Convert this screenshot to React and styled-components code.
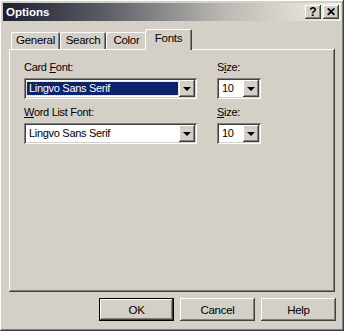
import React from "react";
import styled, { createGlobalStyle, css } from "styled-components";

const Global = createGlobalStyle`
  html, body {
    margin: 0;
    padding: 0;
    background: #d4d0c8;
  }
  body {
    font-family: "Liberation Sans", Arial, sans-serif;
    font-size: 11px;
    letter-spacing: -0.3px;
    color: #000;
  }
`;

const raised = css`
  box-shadow: inset -1px -1px 0 #404040, inset 1px 1px 0 #ffffff,
    inset -2px -2px 0 #808080, inset 2px 2px 0 #d4d0c8;
`;

const sunken = css`
  box-shadow: inset 1px 1px 0 #808080, inset -1px -1px 0 #ffffff,
    inset 2px 2px 0 #404040, inset -2px -2px 0 #d4d0c8;
`;

const Window = styled.div`
  width: 344px;
  height: 331px;
  box-sizing: border-box;
  padding: 3px;
  background: #d4d0c8;
  display: flex;
  flex-direction: column;
  ${raised};
`;

const TitleBar = styled.div`
  height: 18px;
  display: flex;
  align-items: center;
  justify-content: space-between;
  padding: 0 2px 0 3px;
  background: linear-gradient(to right, #1c1f2e 0%, #5b5d66 30%, #b9b8b2 65%, #f4f1e6 100%);
`;

const Title = styled.span`
  color: #fff;
  font-weight: bold;
  font-size: 11.5px;
  letter-spacing: 0;
`;

const Caps = styled.div`
  display: flex;
  gap: 2px;
`;

const CapButton = styled.div`
  width: 16px;
  height: 14px;
  box-sizing: border-box;
  background: #d4d0c8;
  display: flex;
  align-items: center;
  justify-content: center;
  font-weight: bold;
  font-size: 12px;
  line-height: 1;
  letter-spacing: 0;
  ${raised};
`;

const Body = styled.div`
  flex: 1;
  display: flex;
  flex-direction: column;
  padding: 8px 6px 0 6px;
`;

const TabRow = styled.div`
  display: flex;
  align-items: flex-end;
  height: 20px;
  padding-left: 2px;
  position: relative;
  z-index: 1;
`;

const Tab = styled.div`
  box-sizing: border-box;
  width: ${(p) => p.w}px;
  height: ${(p) => (p.active ? 21 : 17)}px;
  margin-left: ${(p) => (p.active ? -2 : 0)}px;
  margin-bottom: ${(p) => (p.active ? -1 : 0)}px;
  padding-top: ${(p) => (p.active ? 3 : 2)}px;
  text-align: center;
  font-size: 11.5px;
  background: #d4d0c8;
  border-radius: 2px 2px 0 0;
  box-shadow: inset 1px 1px 0 #ffffff, inset -1px 0 0 #404040, inset -2px 0 0 #808080;
`;

const Panel = styled.div`
  width: 326px;
  height: 243px;
  box-sizing: border-box;
  padding: 12px 15px;
  background: #d4d0c8;
  ${raised};
`;

const FieldRow = styled.div`
  display: flex;
  gap: 20px;
  margin-bottom: 7px;
`;

const Field = styled.div`
  display: flex;
  flex-direction: column;
`;

const Label = styled.label`
  height: 13px;
  line-height: 13px;
  margin-bottom: 4px;
  u {
    text-decoration: underline;
    text-underline-offset: 1px;
  }
`;

const Combo = styled.div`
  width: ${(p) => p.w}px;
  height: 21px;
  box-sizing: border-box;
  padding: 2px;
  background: #fff;
  display: flex;
  ${sunken};
`;

const ComboText = styled.div`
  flex: 1;
  display: flex;
  align-items: center;
  padding: 1px;
`;

const ComboValue = styled.span`
  flex: 1;
  height: 13px;
  line-height: 13px;
  padding: 0 2px;
  ${(p) =>
    p.selected &&
    css`
      background: #0a246a;
      color: #fff;
      outline: 1px dotted #d4d0c8;
      outline-offset: 0;
    `}
`;

const DropButton = styled.div`
  width: 16px;
  height: 17px;
  box-sizing: border-box;
  background: #d4d0c8;
  display: flex;
  align-items: center;
  justify-content: center;
  ${raised};
`;

const Arrow = styled.div`
  width: 0;
  height: 0;
  border-left: 4px solid transparent;
  border-right: 4px solid transparent;
  border-top: 4px solid #000;
  margin-top: 1px;
`;

const ButtonRow = styled.div`
  display: flex;
  justify-content: flex-end;
  gap: 6px;
  padding: 6px 0 0 0;
  margin-right: -1px;
`;

const Button = styled.div`
  width: 75px;
  height: 23px;
  box-sizing: border-box;
  display: flex;
  align-items: center;
  justify-content: center;
  background: #d4d0c8;
  font-size: 11.5px;
  ${(p) =>
    p.primary
      ? css`
          box-shadow: inset 0 0 0 1px #000, inset -2px -2px 0 #404040,
            inset 2px 2px 0 #ffffff, inset -3px -3px 0 #808080;
        `
      : raised};
`;

const ComboBox = ({ w, value, selected }) => (
  <Combo w={w}>
    <ComboText>
      <ComboValue selected={selected}>{value}</ComboValue>
    </ComboText>
    <DropButton>
      <Arrow />
    </DropButton>
  </Combo>
);

const tabs = [
  { name: "General", w: 49 },
  { name: "Search", w: 46 },
  { name: "Color", w: 41 },
  { name: "Fonts", w: 47, active: true },
];

export default function App() {
  return (
    <>
      <Global />
      <Window>
        <TitleBar>
          <Title>Options</Title>
          <Caps>
            <CapButton>?</CapButton>
            <CapButton>✕</CapButton>
          </Caps>
        </TitleBar>
        <Body>
          <TabRow>
            {tabs.map((t) => (
              <Tab key={t.name} w={t.w} active={t.active}>
                {t.name}
              </Tab>
            ))}
          </TabRow>
          <Panel>
            <FieldRow>
              <Field>
                <Label>
                  Card <u>F</u>ont:
                </Label>
                <ComboBox w={173} value="Lingvo Sans Serif" selected />
              </Field>
              <Field>
                <Label>
                  S<u>i</u>ze:
                </Label>
                <ComboBox w={44} value="10" />
              </Field>
            </FieldRow>
            <FieldRow>
              <Field>
                <Label>
                  <u>W</u>ord List Font:
                </Label>
                <ComboBox w={173} value="Lingvo Sans Serif" />
              </Field>
              <Field>
                <Label>
                  <u>S</u>ize:
                </Label>
                <ComboBox w={44} value="10" />
              </Field>
            </FieldRow>
          </Panel>
          <ButtonRow>
            <Button primary>OK</Button>
            <Button>Cancel</Button>
            <Button>Help</Button>
          </ButtonRow>
        </Body>
      </Window>
    </>
  );
}
